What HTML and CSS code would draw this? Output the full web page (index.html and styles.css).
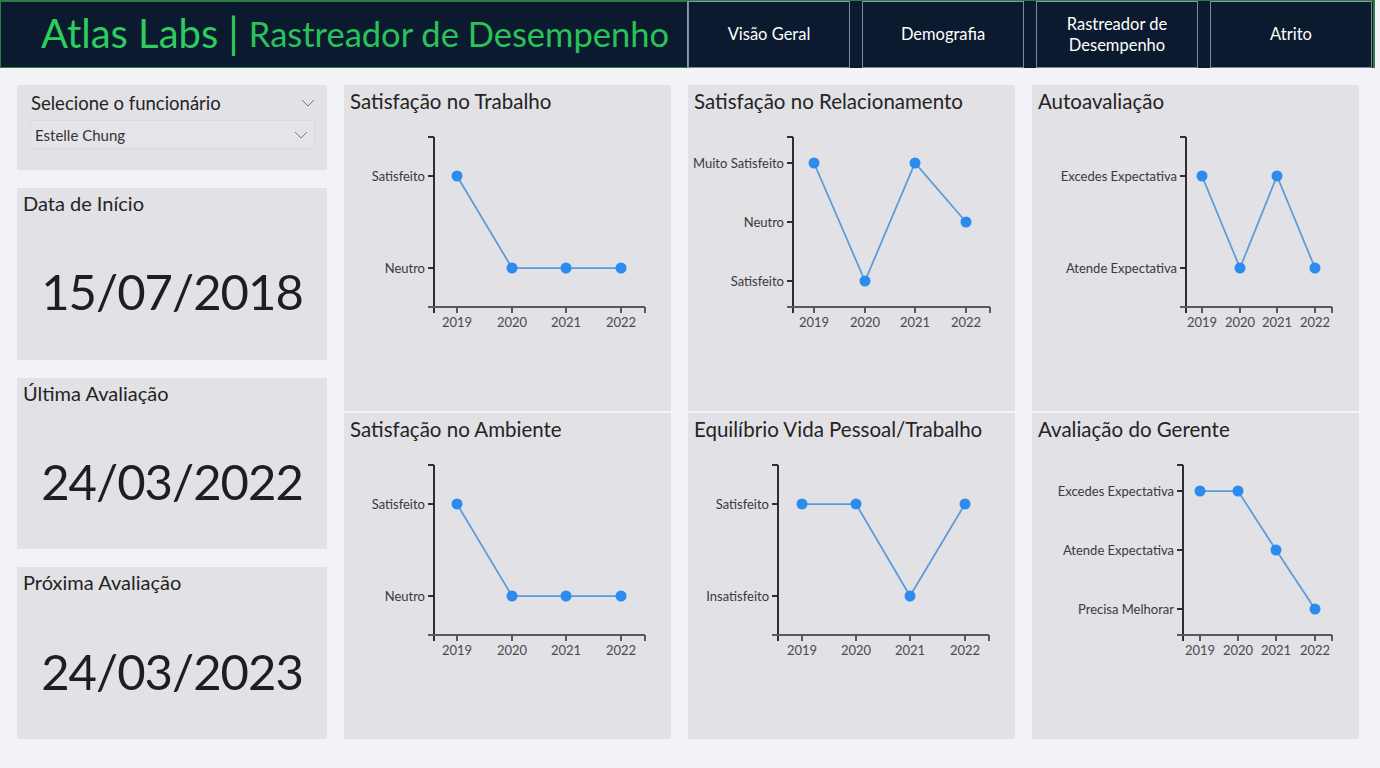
FILE: index.html
```html
<!DOCTYPE html>
<html lang="pt">
<head>
    <meta charset="utf-8">
    <title>Atlas Labs - Rastreador de Desempenho</title>
    <link rel="stylesheet" href="styles.css">
</head>
<body>
    <header class="topbar">
        <div class="brand">
            <span class="brand-name">Atlas Labs</span>
            <span class="brand-sep">|</span>
            <span class="brand-page">Rastreador de Desempenho</span>
        </div>
        <nav class="nav">
            <a class="nav-btn" href="#">Visão Geral</a>
            <a class="nav-btn" href="#">Demografia</a>
            <a class="nav-btn" href="#">Rastreador de<br>Desempenho</a>
            <a class="nav-btn" href="#">Atrito</a>
        </nav>
    </header>

    <main class="board">
        <!-- Left column: slicer + date cards -->
        <div class="side">
            <div class="slicer">
                <div class="slicer-head">
                    <span>Selecione o funcionário</span>
                    <svg class="chev" width="14" height="8" viewBox="0 0 14 8"><path d="M1 1 L7 7 L13 1"/></svg>
                </div>
                <div class="slicer-box">
                    <span>Estelle Chung</span>
                    <svg class="chev" width="14" height="8" viewBox="0 0 14 8"><path d="M1 1 L7 7 L13 1"/></svg>
                </div>
            </div>

            <div class="card">
                <div class="card-label">Data de Início</div>
                <div class="card-value">15/07/2018</div>
            </div>

            <div class="card">
                <div class="card-label">Última Avaliação</div>
                <div class="card-value">24/03/2022</div>
            </div>

            <div class="card">
                <div class="card-label">Próxima Avaliação</div>
                <div class="card-value">24/03/2023</div>
            </div>
        </div>

        <!-- Satisfação no Trabalho -->
        <section class="chart">
            <h2 class="chart-title">Satisfação no Trabalho</h2>
            <svg class="plot" width="327" height="290" viewBox="0 0 327 290">
                <path class="axis" d="M90 16 V192 M84 16 H90 M84 55 H90 M84 147 H90"/>
                <path class="axis-x" d="M84 186 H301 M113 186 V192 M168 186 V192 M222 186 V192 M277 186 V192 M301 186 V192"/>
                <text class="tick-y" x="81" y="59.5">Satisfeito</text>
                <text class="tick-y" x="81" y="151.5">Neutro</text>
                <polyline class="line" points="113,55 168,147 222,147 277,147"/>
                <circle class="dot" cx="113" cy="55" r="5.5"/>
                <circle class="dot" cx="168" cy="147" r="5.5"/>
                <circle class="dot" cx="222" cy="147" r="5.5"/>
                <circle class="dot" cx="277" cy="147" r="5.5"/>
                <text class="tick-x" x="113" y="206">2019</text>
                <text class="tick-x" x="168" y="206">2020</text>
                <text class="tick-x" x="222" y="206">2021</text>
                <text class="tick-x" x="277" y="206">2022</text>
            </svg>
        </section>

        <!-- Satisfação no Relacionamento -->
        <section class="chart">
            <h2 class="chart-title">Satisfação no Relacionamento</h2>
            <svg class="plot" width="327" height="290" viewBox="0 0 327 290">
                <path class="axis" d="M105 16 V192 M99 16 H105 M99 42 H105 M99 101 H105 M99 160 H105"/>
                <path class="axis-x" d="M99 186 H302 M126 186 V192 M177 186 V192 M227 186 V192 M278 186 V192 M302 186 V192"/>
                <text class="tick-y" x="96" y="46.5">Muito Satisfeito</text>
                <text class="tick-y" x="96" y="105.5">Neutro</text>
                <text class="tick-y" x="96" y="164.5">Satisfeito</text>
                <polyline class="line" points="126,42 177,160 227,42 278,101"/>
                <circle class="dot" cx="126" cy="42" r="5.5"/>
                <circle class="dot" cx="177" cy="160" r="5.5"/>
                <circle class="dot" cx="227" cy="42" r="5.5"/>
                <circle class="dot" cx="278" cy="101" r="5.5"/>
                <text class="tick-x" x="126" y="206">2019</text>
                <text class="tick-x" x="177" y="206">2020</text>
                <text class="tick-x" x="227" y="206">2021</text>
                <text class="tick-x" x="278" y="206">2022</text>
            </svg>
        </section>

        <!-- Autoavaliação -->
        <section class="chart">
            <h2 class="chart-title">Autoavaliação</h2>
            <svg class="plot" width="327" height="290" viewBox="0 0 327 290">
                <path class="axis" d="M154 16 V192 M148 16 H154 M148 55 H154 M148 147 H154"/>
                <path class="axis-x" d="M148 186 H300 M170 186 V192 M208 186 V192 M245 186 V192 M283 186 V192 M300 186 V192"/>
                <text class="tick-y" x="145" y="59.5">Excedes Expectativa</text>
                <text class="tick-y" x="145" y="151.5">Atende Expectativa</text>
                <polyline class="line" points="170,55 208,147 245,55 283,147"/>
                <circle class="dot" cx="170" cy="55" r="5.5"/>
                <circle class="dot" cx="208" cy="147" r="5.5"/>
                <circle class="dot" cx="245" cy="55" r="5.5"/>
                <circle class="dot" cx="283" cy="147" r="5.5"/>
                <text class="tick-x" x="170" y="206">2019</text>
                <text class="tick-x" x="208" y="206">2020</text>
                <text class="tick-x" x="245" y="206">2021</text>
                <text class="tick-x" x="283" y="206">2022</text>
            </svg>
        </section>

        <!-- Satisfação no Ambiente -->
        <section class="chart">
            <h2 class="chart-title">Satisfação no Ambiente</h2>
            <svg class="plot" width="327" height="290" viewBox="0 0 327 290">
                <path class="axis" d="M90 16 V192 M84 16 H90 M84 55 H90 M84 147 H90"/>
                <path class="axis-x" d="M84 186 H301 M113 186 V192 M168 186 V192 M222 186 V192 M277 186 V192 M301 186 V192"/>
                <text class="tick-y" x="81" y="59.5">Satisfeito</text>
                <text class="tick-y" x="81" y="151.5">Neutro</text>
                <polyline class="line" points="113,55 168,147 222,147 277,147"/>
                <circle class="dot" cx="113" cy="55" r="5.5"/>
                <circle class="dot" cx="168" cy="147" r="5.5"/>
                <circle class="dot" cx="222" cy="147" r="5.5"/>
                <circle class="dot" cx="277" cy="147" r="5.5"/>
                <text class="tick-x" x="113" y="206">2019</text>
                <text class="tick-x" x="168" y="206">2020</text>
                <text class="tick-x" x="222" y="206">2021</text>
                <text class="tick-x" x="277" y="206">2022</text>
            </svg>
        </section>

        <!-- Equilíbrio Vida Pessoal/Trabalho -->
        <section class="chart">
            <h2 class="chart-title">Equilíbrio Vida Pessoal/Trabalho</h2>
            <svg class="plot" width="327" height="290" viewBox="0 0 327 290">
                <path class="axis" d="M90 16 V192 M84 16 H90 M84 55 H90 M84 147 H90"/>
                <path class="axis-x" d="M84 186 H301 M114 186 V192 M168 186 V192 M222 186 V192 M277 186 V192 M301 186 V192"/>
                <text class="tick-y" x="81" y="59.5">Satisfeito</text>
                <text class="tick-y" x="81" y="151.5">Insatisfeito</text>
                <polyline class="line" points="114,55 168,55 222,147 277,55"/>
                <circle class="dot" cx="114" cy="55" r="5.5"/>
                <circle class="dot" cx="168" cy="55" r="5.5"/>
                <circle class="dot" cx="222" cy="147" r="5.5"/>
                <circle class="dot" cx="277" cy="55" r="5.5"/>
                <text class="tick-x" x="114" y="206">2019</text>
                <text class="tick-x" x="168" y="206">2020</text>
                <text class="tick-x" x="222" y="206">2021</text>
                <text class="tick-x" x="277" y="206">2022</text>
            </svg>
        </section>

        <!-- Avaliação do Gerente -->
        <section class="chart">
            <h2 class="chart-title">Avaliação do Gerente</h2>
            <svg class="plot" width="327" height="290" viewBox="0 0 327 290">
                <path class="axis" d="M151 16 V192 M145 16 H151 M145 42 H151 M145 101 H151 M145 160 H151"/>
                <path class="axis-x" d="M145 186 H300 M168 186 V192 M206 186 V192 M244 186 V192 M283 186 V192 M300 186 V192"/>
                <text class="tick-y" x="142" y="46.5">Excedes Expectativa</text>
                <text class="tick-y" x="142" y="105.5">Atende Expectativa</text>
                <text class="tick-y" x="142" y="164.5">Precisa Melhorar</text>
                <polyline class="line" points="168,42 206,42 244,101 283,160"/>
                <circle class="dot" cx="168" cy="42" r="5.5"/>
                <circle class="dot" cx="206" cy="42" r="5.5"/>
                <circle class="dot" cx="244" cy="101" r="5.5"/>
                <circle class="dot" cx="283" cy="160" r="5.5"/>
                <text class="tick-x" x="168" y="206">2019</text>
                <text class="tick-x" x="206" y="206">2020</text>
                <text class="tick-x" x="244" y="206">2021</text>
                <text class="tick-x" x="283" y="206">2022</text>
            </svg>
        </section>
    </main>
</body>
</html>
```

FILE: styles.css
```css
/* Report page: header bar + grid of cards and charts */
* {
    box-sizing: border-box;
}

body {
    margin: 0;
    font-family: Lato, "Open Sans", sans-serif;
    background-color: #f3f3f7;
    color: #252423;
}

/* ---------- header ---------- */
.topbar {
    display: flex;
    width: 1375px;
    height: 68px;
    background-color: #0b1a2e;
    border-top: 1px solid #2f7a45;
    border-right: 2px solid #2f7a45;
}

.brand {
    flex: 0 0 688px;
    display: flex;
    align-items: center;
    gap: 10px;
    padding: 0 0 3px 40px;
    border: 1px solid #2f7a45;
    border-right-color: #8c9aa6;
    color: #2ecb5e;
    font-size: 40px;
    white-space: nowrap;
}

.brand-sep {
    font-size: 42px;
}

.brand-page {
    color: #28c259;
    font-size: 34.5px;
}

.nav {
    flex: 1;
    display: flex;
    gap: 12px;
}

.nav-btn {
    flex: 0 0 162px;
    display: flex;
    align-items: center;
    justify-content: center;
    text-align: center;
    color: #ffffff;
    text-decoration: none;
    font-size: 16.5px;
    line-height: 21px;
    border: 1px solid #7d8a96;
    border-top-color: #8c9aa6;
    background-color: #0b1a2e;
}

/* ---------- board ---------- */
.board {
    display: grid;
    grid-template-columns: 310px 327px 327px 327px;
    grid-template-rows: 326px 326px;
    column-gap: 17px;
    row-gap: 2px;
    padding: 17px 0 0 17px;
}

.side {
    grid-row: 1 / span 2;
    display: flex;
    flex-direction: column;
    gap: 18px;
}

.slicer {
    height: 85px;
    background-color: #e1e1e6;
    padding: 4px 12px 0 13px;
}

.slicer-head {
    display: flex;
    justify-content: space-between;
    align-items: center;
    height: 27px;
    font-size: 18.5px;
    padding-left: 1px;
}

.slicer-box {
    display: flex;
    justify-content: space-between;
    align-items: center;
    height: 29px;
    margin-top: 4px;
    padding: 0 6px 0 4px;
    background-color: #e4e4e9;
    border: 1px solid #dadadf;
    font-size: 15px;
    color: #333333;
}

.chev {
    fill: none;
    stroke: #7a7a80;
    stroke-width: 1;
}

.card {
    flex: 1;
    display: flex;
    flex-direction: column;
    background-color: #e1e1e6;
    padding: 1px 6px 0;
}

.card-label {
    font-size: 20px;
    line-height: 28px;
}

.card-value {
    flex: 1;
    display: flex;
    align-items: center;
    justify-content: center;
    padding-top: 6px;
    font-size: 49px;
    letter-spacing: -1px;
    color: #1e1e1f;
}

/* ---------- charts ---------- */
.chart {
    background-color: #e1e1e6;
}

.chart-title {
    margin: 0;
    height: 36px;
    padding: 2px 6px 0;
    font-size: 20.5px;
    font-weight: normal;
    line-height: 28px;
}

.plot {
    display: block;
}

.axis {
    fill: none;
    stroke: #2e2e30;
    stroke-width: 2;
}

.axis-x {
    fill: none;
    stroke: #5a5a5e;
    stroke-width: 2;
}

.tick-y,
.tick-x {
    font-family: Lato, "Open Sans", sans-serif;
    font-size: 13px;
    fill: #3a3a3c;
}

.tick-y {
    text-anchor: end;
}

.tick-x {
    text-anchor: middle;
    fill: #4a4a4e;
}

.line {
    fill: none;
    stroke: #5b9bd9;
    stroke-width: 1.75;
}

.dot {
    fill: #2b8ced;
}
```
